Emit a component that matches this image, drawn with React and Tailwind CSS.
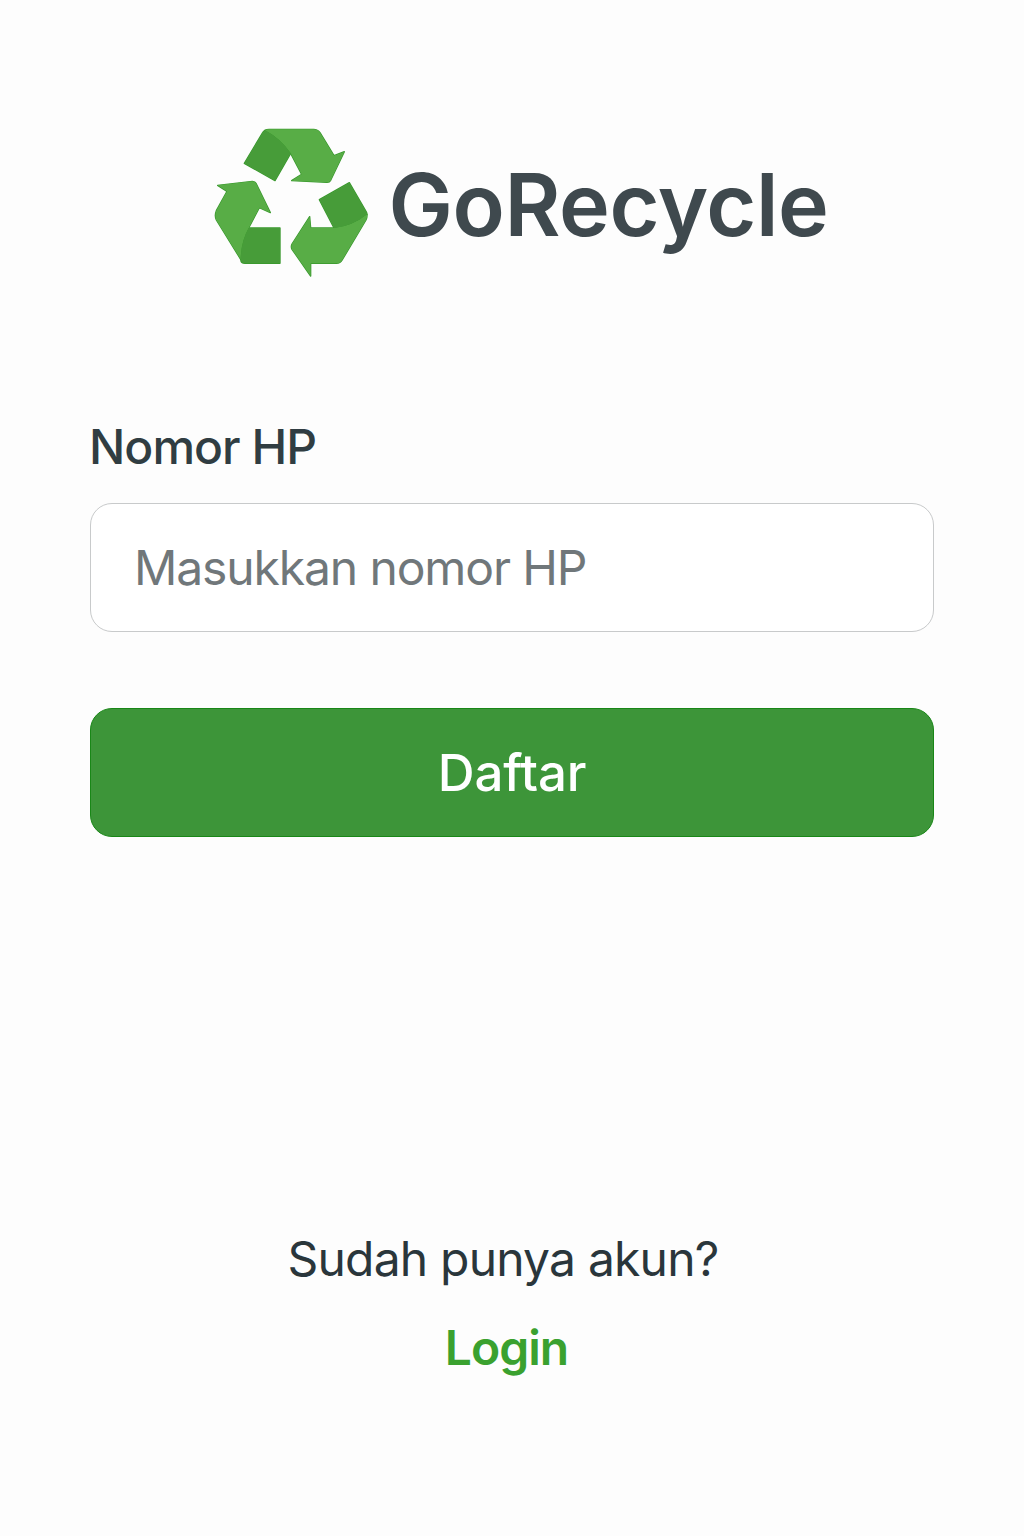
const ARROWS = [
  "M180 31Q184 28 192 28H326Q338 28 345 38L387 107L418 95L377 181Q373 188 365 187L260 182L290 163L257 100Q227 56 180 31Z",
  "M38 196L142 184Q149 184 153 190L196 278L163 263L131 324Q108 365 107 418L34 300Q28 287 34 272L66 214Z",
  "M486 283Q487 292 483 300L412 419Q406 430 394 430H317V468L261 388Q257 380 261 372L314 290L317 324H387Q441 319 486 283Z",
];

const FOLDS = [
  "M118 130L173 38Q176 32 180 31Q227 56 257 100L210 182Z",
  "M131 324H225V430H120Q108 430 107 418Q108 365 131 324Z",
  "M343 239L433 188L483 274Q486 279 486 283Q441 319 387 324Z",
];

function RecycleLogo() {
  return (
    <svg className="h-[150px] w-[154px] shrink-0" viewBox="27 24 462 450" fill="none" aria-hidden="true">
      <g stroke="#37982b" strokeWidth="4" strokeLinejoin="round">
        {[...ARROWS, ...FOLDS].map((d) => <path key={d} d={d} />)}
      </g>
      <g fill="#58ad46">
        {ARROWS.map((d) => <path key={d} d={d} />)}
      </g>
      <g fill="#479c39">
        {FOLDS.map((d) => <path key={d} d={d} />)}
      </g>
    </svg>
  );
}

export default function App() {
  return (
    <main className="flex min-h-[1536px] w-full flex-col bg-[#fdfdfd] px-[90px] font-['Inter',sans-serif] text-[#2a363b]">
      <header className="mt-[128px] ml-[124px] flex h-[150px] items-center">
        <RecycleLogo />
        <h1 className="mt-[3px] ml-[20.5px] text-[86px] leading-[100px] font-semibold tracking-[-0.4px] text-[#3f494e]">GoRecycle</h1>
      </header>
      <form className="mt-[139px] flex flex-col">
        <label className="-ml-px h-[60px] text-[48px] leading-[60px] font-medium tracking-[-0.95px] text-[#303d42]" htmlFor="hp">Nomor HP</label>
        <input id="hp" placeholder="Masukkan nomor HP" className="mt-[26px] h-[129px] rounded-[22px] border border-[#c8cacb] bg-white px-[43px] text-[48px] tracking-[-1.12px] placeholder:text-[#70777a]" />
        <button type="button" className="mt-[76px] h-[129px] rounded-[22px] border border-[#198717] bg-[#3d9539] pt-px text-[51px] font-medium tracking-[-0.2px] text-white">Daftar</button>
      </form>
      <footer className="mt-[392px] mr-[18px] flex flex-col items-center">
        <p className="text-[48px] leading-[60px] tracking-[-0.8px]">Sudah punya akun?</p>
        <a className="mt-[29px] ml-[7px] text-[48px] leading-[60px] font-semibold tracking-[-1px] text-[#3aa12f]">Login</a>
      </footer>
    </main>
  );
}
